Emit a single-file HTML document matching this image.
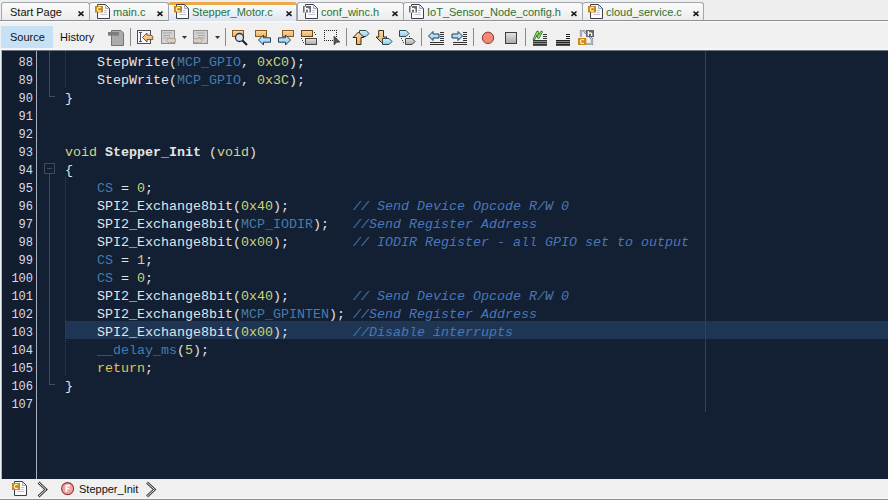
<!DOCTYPE html>
<html><head><meta charset="utf-8">
<style>
*{margin:0;padding:0;box-sizing:border-box}
html,body{width:888px;height:500px;overflow:hidden;background:#f0f0f0;font-family:"Liberation Sans",sans-serif}
.abs{position:absolute}
#tabbar{position:absolute;left:0;top:0;width:888px;height:21px;background:#eeeeee}
#tabline{position:absolute;left:0;top:20px;width:888px;height:1px;background:#8e9298}
.tab{position:absolute;top:2px;height:19px;border:1px solid #a2a6ad;border-bottom-color:#8e9298;border-radius:3px 3px 0 0;background:linear-gradient(#fbfbfb,#ececec);font-size:11px}
.tab.act{border-top:3px solid #eca94c;border-bottom:none;background:linear-gradient(#fafbfd,#dde4f0);height:19px}
.tt{position:absolute;top:6px;font-size:11px;white-space:nowrap;line-height:13px}
#toolbar{position:absolute;left:0;top:21px;width:888px;height:29px;background:linear-gradient(#f8f8f8 0,#f8f8f8 1px,#f0f0f0 2px,#f0f0f0 27px,#f6f8fa 28px)}
#editor{position:absolute;left:0;top:50px;width:888px;height:429px;background:#131f33;border-top:1px solid #6b7380}
#gutter{position:absolute;left:2px;top:51px;width:34px;height:428px;background:#121d30}
#gsep{position:absolute;left:36px;top:51px;width:1px;height:428px;background:#a8b0bd}
#lborder{position:absolute;left:0;top:50px;width:2px;height:429px;background:linear-gradient(90deg,#eef1f5 1px,#aeb6c2 1px)}
.ln{position:absolute;left:2px;width:31px;text-align:right;font-family:"Liberation Mono",monospace;font-size:12px;color:#dadde3;height:18px;line-height:18px}
.code{position:absolute;left:65px;font-family:"Liberation Mono",monospace;font-size:13.333px;color:#e2e4e8;white-space:pre;height:18px;line-height:18px}
.m{color:#467cab}.n{color:#d8d172}.k{color:#dbd27c}.r{color:#e3c54a}.c{color:#4878b9;font-style:italic}.b{font-weight:bold}
#status{position:absolute;left:0;top:479px;width:888px;height:21px;background:linear-gradient(#f0f0f0 0,#f0f0f0 15px,#edf0f1 16px,#edf0f1 18px,#f5f8fb 19px);border-bottom:1px solid #8a9098}
</style></head><body>
<div id="tabbar"></div>
<div id="tabline"></div>
<div class="tab" style="left:1px;width:89px"></div>
<div class="tab" style="left:89px;width:80px"></div>
<div class="tab act" style="left:168px;width:129px"></div>
<div class="tab" style="left:297px;width:107px"></div>
<div class="tab" style="left:403px;width:180px"></div>
<div class="tab" style="left:582px;width:122px"></div>
<div class="tt" style="left:10px;color:#111">Start Page</div>
<div class="tt" style="left:113px;color:#2b7231">main.c</div>
<div class="tt" style="left:192px;color:#2b7231">Stepper_Motor.c</div>
<div class="tt" style="left:321px;color:#2b7231">conf_winc.h</div>
<div class="tt" style="left:427px;color:#2b7231">IoT_Sensor_Node_config.h</div>
<div class="tt" style="left:606px;color:#2b7231">cloud_service.c</div>
<svg class="abs" style="left:0;top:0" width="888" height="21" viewBox="0 0 888 21">
<path d="M78.5 11.5 L83.5 15.8 M83.5 11.5 L78.5 15.8" stroke="#151515" stroke-width="1.6"/>
<path d="M157.5 11.5 L162.5 15.8 M162.5 11.5 L157.5 15.8" stroke="#151515" stroke-width="1.6"/>
<g transform="translate(95,4)"><path d="M2.5 0.5 H10.5 L14.5 4.5 V14.5 H2.5 Z" fill="#fbfbfd" stroke="#3a3f4a"/><path d="M10.5 1 V4.5 H14" fill="#dfe3f3" stroke="#9098b0" stroke-width="0.8"/><path d="M9 6.5 H12 M9 8.5 H11.5 M5.5 10.5 H12" stroke="#a6abba" stroke-width="0.7"/><rect x="0" y="2" width="8" height="6.5" fill="#c4891c"/><path d="M6 3.9 Q4.2 2.9 2.8 3.9 Q1.8 5.25 2.8 6.6 Q4.2 7.6 6 6.6" fill="none" stroke="#fff0b0" stroke-width="1.3"/></g>
<path d="M286.5 11.5 L291.5 15.8 M291.5 11.5 L286.5 15.8" stroke="#151515" stroke-width="1.6"/>
<g transform="translate(174,4)"><path d="M2.5 0.5 H10.5 L14.5 4.5 V14.5 H2.5 Z" fill="#fbfbfd" stroke="#3a3f4a"/><path d="M10.5 1 V4.5 H14" fill="#dfe3f3" stroke="#9098b0" stroke-width="0.8"/><path d="M9 6.5 H12 M9 8.5 H11.5 M5.5 10.5 H12" stroke="#a6abba" stroke-width="0.7"/><rect x="0" y="2" width="8" height="6.5" fill="#c4891c"/><path d="M6 3.9 Q4.2 2.9 2.8 3.9 Q1.8 5.25 2.8 6.6 Q4.2 7.6 6 6.6" fill="none" stroke="#fff0b0" stroke-width="1.3"/></g>
<path d="M392.5 11.5 L397.5 15.8 M397.5 11.5 L392.5 15.8" stroke="#151515" stroke-width="1.6"/>
<g transform="translate(303,4)"><path d="M2.5 0.5 H10.5 L14.5 4.5 V14.5 H2.5 Z" fill="#fbfbfd" stroke="#3a3f4a"/><path d="M10.5 1 V4.5 H14" fill="#dfe3f3" stroke="#9098b0" stroke-width="0.8"/><path d="M9 6.5 H12 M9 8.5 H11.5 M5.5 10.5 H12" stroke="#a6abba" stroke-width="0.7"/><rect x="0" y="2" width="8" height="6.5" fill="#6a6a6a"/><path d="M2.3 2.6 V8.4 M2.3 5.6 Q4.2 4.1 5.7 5.4 V8.4" fill="none" stroke="#fff" stroke-width="1.5"/></g>
<path d="M571.5 11.5 L576.5 15.8 M576.5 11.5 L571.5 15.8" stroke="#151515" stroke-width="1.6"/>
<g transform="translate(409,4)"><path d="M2.5 0.5 H10.5 L14.5 4.5 V14.5 H2.5 Z" fill="#fbfbfd" stroke="#3a3f4a"/><path d="M10.5 1 V4.5 H14" fill="#dfe3f3" stroke="#9098b0" stroke-width="0.8"/><path d="M9 6.5 H12 M9 8.5 H11.5 M5.5 10.5 H12" stroke="#a6abba" stroke-width="0.7"/><rect x="0" y="2" width="8" height="6.5" fill="#6a6a6a"/><path d="M2.3 2.6 V8.4 M2.3 5.6 Q4.2 4.1 5.7 5.4 V8.4" fill="none" stroke="#fff" stroke-width="1.5"/></g>
<path d="M693.5 11.5 L698.5 15.8 M698.5 11.5 L693.5 15.8" stroke="#151515" stroke-width="1.6"/>
<g transform="translate(588,4)"><path d="M2.5 0.5 H10.5 L14.5 4.5 V14.5 H2.5 Z" fill="#fbfbfd" stroke="#3a3f4a"/><path d="M10.5 1 V4.5 H14" fill="#dfe3f3" stroke="#9098b0" stroke-width="0.8"/><path d="M9 6.5 H12 M9 8.5 H11.5 M5.5 10.5 H12" stroke="#a6abba" stroke-width="0.7"/><rect x="0" y="2" width="8" height="6.5" fill="#c4891c"/><path d="M6 3.9 Q4.2 2.9 2.8 3.9 Q1.8 5.25 2.8 6.6 Q4.2 7.6 6 6.6" fill="none" stroke="#fff0b0" stroke-width="1.3"/></g>
</svg>
<div id="toolbar"></div>
<div class="abs" style="left:1px;top:26px;width:52px;height:22px;background:#c6e0f6"></div>
<div class="abs" style="left:10px;top:31px;font-size:11px;color:#111">Source</div>
<div class="abs" style="left:60px;top:31px;font-size:11px;color:#111">History</div>
<svg class="abs" style="left:0;top:0" width="888" height="50" viewBox="0 0 888 50">
<defs>
<linearGradient id="gOr" x1="0" y1="0" x2="0" y2="1"><stop offset="0" stop-color="#f9d9a8"/><stop offset="1" stop-color="#eab064"/></linearGradient>
<linearGradient id="gBl" x1="0" y1="0" x2="0" y2="1"><stop offset="0" stop-color="#d8f0fb"/><stop offset="1" stop-color="#8fc9ea"/></linearGradient>
<linearGradient id="gGr" x1="0" y1="0" x2="0" y2="1"><stop offset="0" stop-color="#e4e4e4"/><stop offset="1" stop-color="#a8a8a8"/></linearGradient>
</defs>
<!-- gray doc -->
<path d="M111.5 30.5 H121 L123.5 33 V45.5 H111.5 Z" fill="#ababab" stroke="#747474"/>
<rect x="108" y="32" width="11" height="3.6" fill="#7c7c7c"/>
<!-- separators -->
<g fill="#8a8a8a"><rect x="130" y="28" width="1" height="18"/><rect x="225" y="28" width="1" height="18"/><rect x="346" y="28" width="1" height="18"/><rect x="421" y="28" width="1" height="18"/><rect x="473" y="28" width="1" height="18"/><rect x="525" y="28" width="1" height="18"/></g>
<!-- I-beam box -->
<rect x="137.5" y="30.5" width="13" height="13" fill="#f6f6fa" stroke="#4a4e58"/>
<path d="M139 32.5 H142 M140.5 32.5 V41.5 M139 41.5 H142" stroke="#50545e" fill="none"/>
<path d="M142.5 37.5 L147 33 V35.2 H150.5 Q152.8 35.2 152.8 37.6 V39.6 H147 V42 Z" fill="url(#gOr)" stroke="#6a4a1e" stroke-width="0.9"/>
<!-- gray boxes with arrows -->
<rect x="161.5" y="30.5" width="13" height="13" fill="#d2d2d2" stroke="#8e8e8e"/>
<path d="M163 33 H172 M163 35.5 H170 M163 38 H168" stroke="#a9a9a9"/>
<path d="M166.5 40.5 L170 37 V38.7 H175.5 V42.3 H170 V44 Z" fill="#dcd2c4" stroke="#a09888" stroke-width="0.8"/>
<path d="M182 36 H187 L184.5 39 Z" fill="#333"/>
<rect x="193.5" y="30.5" width="14" height="13" fill="#d2d2d2" stroke="#8e8e8e"/>
<path d="M196 33 H205 M198 35.5 H205 M200 38 H205" stroke="#a9a9a9"/>
<path d="M202.5 40.5 L199 37 V38.7 H193.5 V42.3 H199 V44 Z" fill="#dcd2c4" stroke="#a09888" stroke-width="0.8"/>
<path d="M215 36 H220 L217.5 39 Z" fill="#333"/>
<!-- find -->
<rect x="232.5" y="30.5" width="11" height="6" fill="url(#gOr)" stroke="#8a5a20"/>
<circle cx="239.5" cy="37.5" r="4" fill="#d8e4f0" stroke="#2a2e36" stroke-width="1.3"/>
<path d="M242.5 40.5 L247 45" stroke="#1a1a1a" stroke-width="2"/>
<!-- prev bookmark -->
<rect x="255.5" y="30.5" width="11" height="6" fill="url(#gOr)" stroke="#8a5a20"/>
<path d="M258.5 40 L263.5 35 V37.8 H270.5 V42.2 H263.5 V45 Z" fill="url(#gBl)" stroke="#1e3e5a" stroke-width="1"/>
<!-- next bookmark -->
<rect x="282.5" y="30.5" width="11" height="6" fill="url(#gOr)" stroke="#8a5a20"/>
<path d="M290.5 40 L285.5 35 V37.8 H278.5 V42.2 H285.5 V45 Z" fill="url(#gBl)" stroke="#1e3e5a" stroke-width="1"/>
<!-- toggle -->
<rect x="301.5" y="30.5" width="11" height="6" fill="url(#gOr)" stroke="#6a4418"/>
<rect x="305.5" y="38.5" width="11" height="6" fill="url(#gGr)" stroke="#444"/>
<g fill="#333"><rect x="314" y="32" width="1" height="1"/><rect x="315" y="34" width="1" height="1"/><rect x="301" y="38" width="1" height="1"/><rect x="302" y="40" width="1" height="1"/><rect x="303" y="42" width="1" height="1"/></g>
<!-- dotted select -->
<g fill="#222"><rect x="324" y="30" width="1" height="1"/><rect x="324" y="40" width="1" height="1"/><rect x="326" y="30" width="1" height="1"/><rect x="326" y="40" width="1" height="1"/><rect x="328" y="30" width="1" height="1"/><rect x="328" y="40" width="1" height="1"/><rect x="330" y="30" width="1" height="1"/><rect x="330" y="40" width="1" height="1"/><rect x="332" y="30" width="1" height="1"/><rect x="332" y="40" width="1" height="1"/><rect x="334" y="30" width="1" height="1"/><rect x="334" y="40" width="1" height="1"/><rect x="336" y="30" width="1" height="1"/><rect x="336" y="40" width="1" height="1"/><rect x="324" y="32" width="1" height="1"/><rect x="336" y="32" width="1" height="1"/><rect x="324" y="34" width="1" height="1"/><rect x="336" y="34" width="1" height="1"/><rect x="324" y="36" width="1" height="1"/><rect x="336" y="36" width="1" height="1"/><rect x="324" y="38" width="1" height="1"/><rect x="336" y="38" width="1" height="1"/></g>
<path d="M334 36 L334 45 L336.5 42.5 L340 42 Z" fill="#555" stroke="#333" stroke-width="0.6"/>
<!-- up arrow tags -->
<path d="M359.5 30.5 H366 L369 33.5 L366 36.5 H359.5 Z" fill="url(#gBl)" stroke="#2a4a5a"/>
<path d="M358.5 32 L353 37.5 H356.5 V44.5 H361 V37.5 H364 Z" fill="url(#gOr)" stroke="#3a2a10"/>
<!-- down -->
<path d="M378.7 30.5 H383.5 V37 H387 L381.5 42.5 L376 37 H378.7 Z" fill="url(#gOr)" stroke="#3a2a10"/>
<path d="M382.5 38.5 H389 L392 41.5 L389 44.5 H382.5 Z" fill="url(#gBl)" stroke="#2a4a5a"/>
<!-- tags -->
<path d="M399.5 30.5 H406 L409 33.5 L406 36.5 H399.5 Z" fill="url(#gBl)" stroke="#2a4a5a"/>
<path d="M405.5 38.5 H412 L415 41.5 L412 44.5 H405.5 Z" fill="url(#gGr)" stroke="#444"/>
<g fill="#333"><rect x="401" y="38" width="1" height="1"/><rect x="402" y="40" width="1" height="1"/><rect x="403" y="42" width="1" height="1"/><rect x="409" y="36" width="1" height="1"/></g>
<!-- shift left -->
<path d="M428.5 36 L433 31.5 V34 H439 V38 H433 V40.5 Z" fill="url(#gBl)" stroke="#1e3e5a"/>
<g fill="#333"><rect x="440" y="32" width="4" height="1"/><rect x="440" y="34" width="4" height="1"/><rect x="440" y="36" width="4" height="1"/><rect x="440" y="38" width="4" height="1"/><rect x="440" y="40" width="4" height="1"/><rect x="430" y="42" width="14" height="1"/><rect x="430" y="44" width="14" height="1"/></g>
<!-- shift right -->
<path d="M462.5 36 L458 31.5 V34 H452 V38 H458 V40.5 Z" fill="url(#gBl)" stroke="#1e3e5a"/>
<g fill="#333"><rect x="463" y="32" width="4" height="1"/><rect x="463" y="34" width="4" height="1"/><rect x="463" y="36" width="4" height="1"/><rect x="463" y="38" width="4" height="1"/><rect x="463" y="40" width="4" height="1"/><rect x="453" y="42" width="14" height="1"/><rect x="453" y="44" width="14" height="1"/></g>
<!-- record / stop -->
<circle cx="488" cy="37.8" r="5.7" fill="#f28878" stroke="#8e3a34" stroke-width="1"/>
<rect x="505.5" y="32.5" width="11" height="11" fill="url(#gGr)" stroke="#3e3e3e"/>
<!-- green wave -->
<path d="M534 39 L537.5 32 L538.5 37.5 L541.5 32" fill="none" stroke="#2e7a1e" stroke-width="2.6" stroke-linejoin="round" stroke-linecap="round"/>
<path d="M534 39 L537.5 32 L538.5 37.5 L541.5 32" fill="none" stroke="#b8f090" stroke-width="0.9" stroke-linejoin="round" stroke-linecap="round"/>
<g fill="#333"><rect x="543" y="34" width="4" height="1"/><rect x="543" y="36" width="4" height="1"/><rect x="543" y="38" width="4" height="1"/><rect x="533" y="40" width="14" height="6" fill="#8a8a8a"/><rect x="533" y="40" width="14" height="1"/><rect x="533" y="42" width="14" height="1"/><rect x="533" y="44" width="14" height="1"/><rect x="533" y="45" width="14" height="1" fill="#555"/></g>
<!-- lines -->
<g fill="#222"><rect x="566" y="34" width="4" height="1"/><rect x="566" y="36" width="4" height="1"/><rect x="566" y="38" width="4" height="1"/><rect x="556" y="40" width="14" height="6" fill="#8a8a8a"/><rect x="556" y="40" width="14" height="1"/><rect x="556" y="42" width="14" height="1"/><rect x="556" y="44" width="14" height="1"/><rect x="556" y="45" width="14" height="1" fill="#555"/></g>
<!-- c/h switch -->
<path d="M581 37 V31 H584 L592 39 V44 H586" fill="none" stroke="#7a8498" stroke-width="2.2"/>
<path d="M581 37 V31 H584 L592 39 V44 H586" fill="none" stroke="#dfe8f4" stroke-width="0.8"/>
<rect x="586" y="30" width="8" height="7" fill="#666"/>
<path d="M588.3 31 V36 M588.3 33.6 Q590.5 32 591.7 33.6 V36" fill="none" stroke="#fff" stroke-width="1.2"/>
<rect x="578" y="38" width="8.3" height="7" fill="#cc8a1c"/>
<path d="M584 39.9 Q582.2 39 580.8 40.2 Q579.9 41.5 580.8 42.8 Q582.2 44 584 43.1" fill="none" stroke="#fff2b8" stroke-width="1.2"/>
</svg>

<div id="editor"></div>
<div id="lborder"></div>
<div id="gutter"></div>
<div id="gsep"></div>
<div class="abs" style="left:65px;top:321px;width:823px;height:18px;background:#1e3654"></div>
<div class="abs" style="left:705px;top:51px;width:1px;height:361px;background:#2e445c"></div>
<div class="abs" style="left:49px;top:51px;width:1px;height:46px;background:#3e4b5f"></div>
<div class="abs" style="left:49px;top:96px;width:6px;height:1px;background:#3e4b5f"></div>
<div class="abs" style="left:44px;top:163px;width:11px;height:11px;border:1px solid #3e4b5f"></div>
<div class="abs" style="left:47px;top:168px;width:5px;height:1px;background:#3e4b5f"></div>
<div class="abs" style="left:49px;top:174px;width:1px;height:211px;background:#3e4b5f"></div>
<div class="abs" style="left:49px;top:384px;width:6px;height:1px;background:#3e4b5f"></div>
<div class="abs" style="left:65px;top:51px;width:1px;height:36px;border-left:1px dotted #334358"></div>
<div class="abs" style="left:65px;top:177px;width:1px;height:198px;border-left:1px dotted #334358"></div>
<div id="lines">
<div class="ln" style="top:54px">88</div>
<div class="ln" style="top:72px">89</div>
<div class="ln" style="top:90px">90</div>
<div class="ln" style="top:108px">91</div>
<div class="ln" style="top:126px">92</div>
<div class="ln" style="top:144px">93</div>
<div class="ln" style="top:162px">94</div>
<div class="ln" style="top:180px">95</div>
<div class="ln" style="top:198px">96</div>
<div class="ln" style="top:216px">97</div>
<div class="ln" style="top:234px">98</div>
<div class="ln" style="top:252px">99</div>
<div class="ln" style="top:270px">100</div>
<div class="ln" style="top:288px">101</div>
<div class="ln" style="top:306px">102</div>
<div class="ln" style="top:324px">103</div>
<div class="ln" style="top:342px">104</div>
<div class="ln" style="top:360px">105</div>
<div class="ln" style="top:378px">106</div>
<div class="ln" style="top:396px">107</div>
<div class="code" style="top:54px">    StepWrite(<span class="m">MCP_GPIO</span>, <span class="n">0xC0</span>);</div>
<div class="code" style="top:72px">    StepWrite(<span class="m">MCP_GPIO</span>, <span class="n">0x3C</span>);</div>
<div class="code" style="top:90px">}</div>
<div class="code" style="top:144px"><span class="k">void</span> <span class="b">Stepper_Init</span> (<span class="k">void</span>)</div>
<div class="code" style="top:162px">{</div>
<div class="code" style="top:180px">    <span class="m">CS</span> = <span class="n">0</span>;</div>
<div class="code" style="top:198px">    SPI2_Exchange8bit(<span class="n">0x40</span>);        <span class="c">// Send Device Opcode R/W 0</span></div>
<div class="code" style="top:216px">    SPI2_Exchange8bit(<span class="m">MCP_IODIR</span>);   <span class="c">//Send Register Address</span></div>
<div class="code" style="top:234px">    SPI2_Exchange8bit(<span class="n">0x00</span>);        <span class="c">// IODIR Register - all GPIO set to output</span></div>
<div class="code" style="top:252px">    <span class="m">CS</span> = <span class="n">1</span>;</div>
<div class="code" style="top:270px">    <span class="m">CS</span> = <span class="n">0</span>;</div>
<div class="code" style="top:288px">    SPI2_Exchange8bit(<span class="n">0x40</span>);        <span class="c">// Send Device Opcode R/W 0</span></div>
<div class="code" style="top:306px">    SPI2_Exchange8bit(<span class="m">MCP_GPINTEN</span>); <span class="c">//Send Register Address</span></div>
<div class="code" style="top:324px">    SPI2_Exchange8bit(<span class="n">0x00</span>);        <span class="c">//Disable interrupts</span></div>
<div class="code" style="top:342px">    <span class="m">__delay_ms</span>(<span class="n">5</span>);</div>
<div class="code" style="top:360px">    <span class="r">return</span>;</div>
<div class="code" style="top:378px">}</div>
</div>
<div id="status"></div>
<div class="abs" style="left:79px;top:483px;font-size:11px;line-height:13px;color:#111">Stepper_Init</div>
<svg class="abs" style="left:0;top:479px" width="888" height="21" viewBox="0 479 888 21">
<g transform="translate(12,481)"><path d="M2.5 0.5 H10.5 L14.5 4.5 V14.5 H2.5 Z" fill="#fbfbfd" stroke="#3a3f4a"/><path d="M10.5 1 V4.5 H14" fill="#dfe3f3" stroke="#9098b0" stroke-width="0.8"/><path d="M9 6.5 H12 M9 8.5 H11.5 M5.5 10.5 H12" stroke="#a6abba" stroke-width="0.7"/><rect x="0" y="2" width="8" height="7" fill="#c4891c"/><path d="M6 3.9 Q4.2 2.9 2.8 3.9 Q1.8 5.5 2.8 7 Q4.2 8 6 7" fill="none" stroke="#fff0b0" stroke-width="1.3"/></g>
<path d="M38.5 482.5 L46 489.5 L38.5 496.5" fill="none" stroke="#333" stroke-width="2.6"/>
<path d="M38.5 482.5 L46 489.5 L38.5 496.5" fill="none" stroke="#f0f0f0" stroke-width="1"/>
<circle cx="67.6" cy="488.6" r="6" fill="#f0a2a2" stroke="#8a3a3a" stroke-width="1.1"/>
<path d="M66.3 492 V485.6 H70 M66.3 488.6 H69.3" fill="none" stroke="#fff" stroke-width="1.6"/>
<path d="M147 482.5 L154.5 489.5 L147 496.5" fill="none" stroke="#333" stroke-width="2.6"/>
<path d="M147 482.5 L154.5 489.5 L147 496.5" fill="none" stroke="#f0f0f0" stroke-width="1"/>
</svg>
</body></html>
